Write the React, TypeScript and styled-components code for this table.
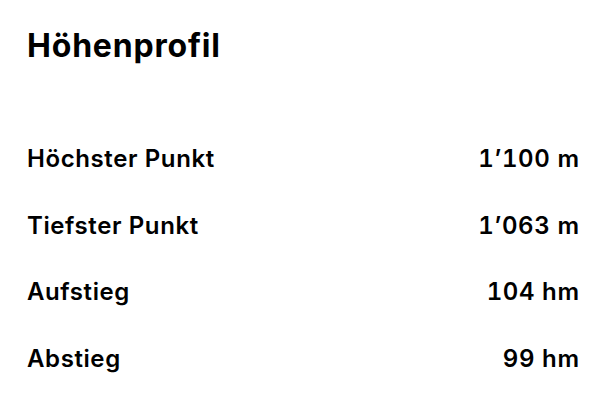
import React from "react";
import styled, { createGlobalStyle } from "styled-components";

const GlobalStyle = createGlobalStyle`
  html, body {
    margin: 0;
    padding: 0;
    background: #ffffff;
  }
  body {
    font-family: Inter, "Noto Sans", "Liberation Sans", sans-serif;
    color: #000000;
    -webkit-font-smoothing: antialiased;
  }
`;

const Page = styled.div`
  width: 605px;
  height: 400px;
  box-sizing: border-box;
  padding: 26px 26px 0 27px;
  background: #ffffff;
  display: flex;
  flex-direction: column;
`;

const Title = styled.h1`
  margin: 0;
  font-size: 32px;
  line-height: 40px;
  font-weight: 700;
  letter-spacing: 0.8px;
`;

const List = styled.div`
  margin-top: 78px;
  display: flex;
  flex-direction: column;
`;

const Row = styled.div`
  height: 66.7px;
  display: flex;
  justify-content: space-between;
  align-items: flex-start;
  font-size: 24px;
  line-height: 30px;
  font-weight: 600;
  letter-spacing: 0.6px;
`;

const Label = styled.span``;

const Value = styled.span`
  font-variant-numeric: tabular-nums;
  margin-right: -0.6px;
`;

const rows = [
  { label: "Höchster Punkt", value: "1’100 m" },
  { label: "Tiefster Punkt", value: "1’063 m" },
  { label: "Aufstieg", value: "104 hm" },
  { label: "Abstieg", value: "99 hm" },
];

export default function App() {
  return (
    <>
      <GlobalStyle />
      <Page>
        <Title>Höhenprofil</Title>
        <List>
          {rows.map((r) => (
            <Row key={r.label}>
              <Label>{r.label}</Label>
              <Value>{r.value}</Value>
            </Row>
          ))}
        </List>
      </Page>
    </>
  );
}
